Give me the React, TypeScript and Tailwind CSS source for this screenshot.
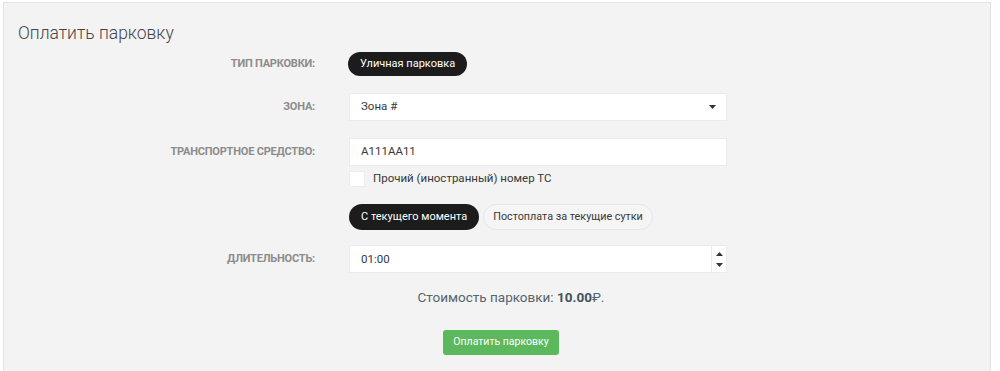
import React from 'react';

const font = { fontFamily: 'Roboto, "Noto Sans", sans-serif' };

const Label = ({ children }: { children: React.ReactNode }) => (
  <div className="w-[297px] shrink-0 text-right text-[11px] font-bold uppercase text-[#8c8c8c] tracking-[-0.2px]">
    {children}
  </div>
);

const Caret = ({ up = false }: { up?: boolean }) => (
  <svg width="7" height="4" viewBox="0 0 7 4" className={up ? 'rotate-180' : ''}>
    <path d="M0 0h7L3.5 4z" fill="#333" />
  </svg>
);

export default function App() {
  return (
    <div className="w-[1000px] h-[371px] bg-white pt-[2px] pl-[3px]" style={font}>
      <div className="w-[988px] h-[369px] bg-[#f3f3f3] border-t border-l border-r border-[#e3e3e3] pl-[14px]">
        <h1 className="pt-[19px] text-[17.5px] leading-[22px] font-light text-[#454545]">Оплатить парковку</h1>

        {/* тип парковки */}
        <div className="mt-[8px] flex items-center">
          <Label>Тип парковки:</Label>
          <div className="ml-[33px] h-[24px] px-[12px] rounded-full bg-[#1c1c1c] text-white text-[11px] flex items-center">
            Уличная парковка
          </div>
        </div>

        {/* зона */}
        <div className="mt-[17px] flex items-center">
          <Label>Зона:</Label>
          <div className="ml-[34px] w-[378px] h-[28px] bg-white border border-[#ebebeb] flex items-center justify-between pl-[11px] pr-[10px] text-[11.5px] text-[#383838]">
            <span>Зона #</span>
            <Caret />
          </div>
        </div>

        {/* транспортное средство */}
        <div className="mt-[17px] flex items-center">
          <Label>Транспортное средство:</Label>
          <div className="ml-[34px] w-[378px] h-[28px] bg-white border border-[#ebebeb] flex items-center pl-[11px] text-[11.5px] text-[#383838]">
            A111AA11
          </div>
        </div>

        <div className="mt-[4px] ml-[331px] flex items-center">
          <div className="w-[16px] h-[16px] bg-white border border-[#ececec]" />
          <span className="ml-[8px] text-[11.5px] text-[#383838]">Прочий (иностранный) номер ТС</span>
        </div>

        <div className="mt-[17px] ml-[331px] flex items-center gap-[4px]">
          <div className="h-[26px] px-[12px] rounded-full bg-[#1c1c1c] text-white text-[11px] flex items-center">
            С текущего момента
          </div>
          <div className="h-[26px] px-[9px] rounded-full bg-[#f5f5f5] border border-[#e6e6e6] text-[#383838] text-[10.8px] flex items-center">
            Постоплата за текущие сутки
          </div>
        </div>

        {/* длительность */}
        <div className="mt-[15px] flex items-center">
          <Label>Длительность:</Label>
          <div className="ml-[34px] w-[378px] h-[28px] flex">
            <div className="flex-1 bg-white border border-[#ebebeb] flex items-center pl-[11px] text-[11.5px] text-[#383838]">
              01:00
            </div>
            <div className="w-[15px] bg-white border-y border-r border-[#ebebeb] flex flex-col items-center justify-center gap-[7px]">
              <Caret up />
              <Caret />
            </div>
          </div>
        </div>

        <div className="mt-[14px] ml-[304px] w-[378px] text-center text-[13.5px] text-[#56646e]">
          Стоимость парковки: <b className="font-bold text-[#44525c]">10.00</b>₽.
        </div>

        <div className="mt-[22px] flex justify-center pr-[6px]">
          <button className="h-[25px] px-[10px] rounded-[3px] bg-[#5cb85c] text-white text-[10.5px] leading-none">
            Оплатить парковку
          </button>
        </div>
      </div>
    </div>
  );
}
